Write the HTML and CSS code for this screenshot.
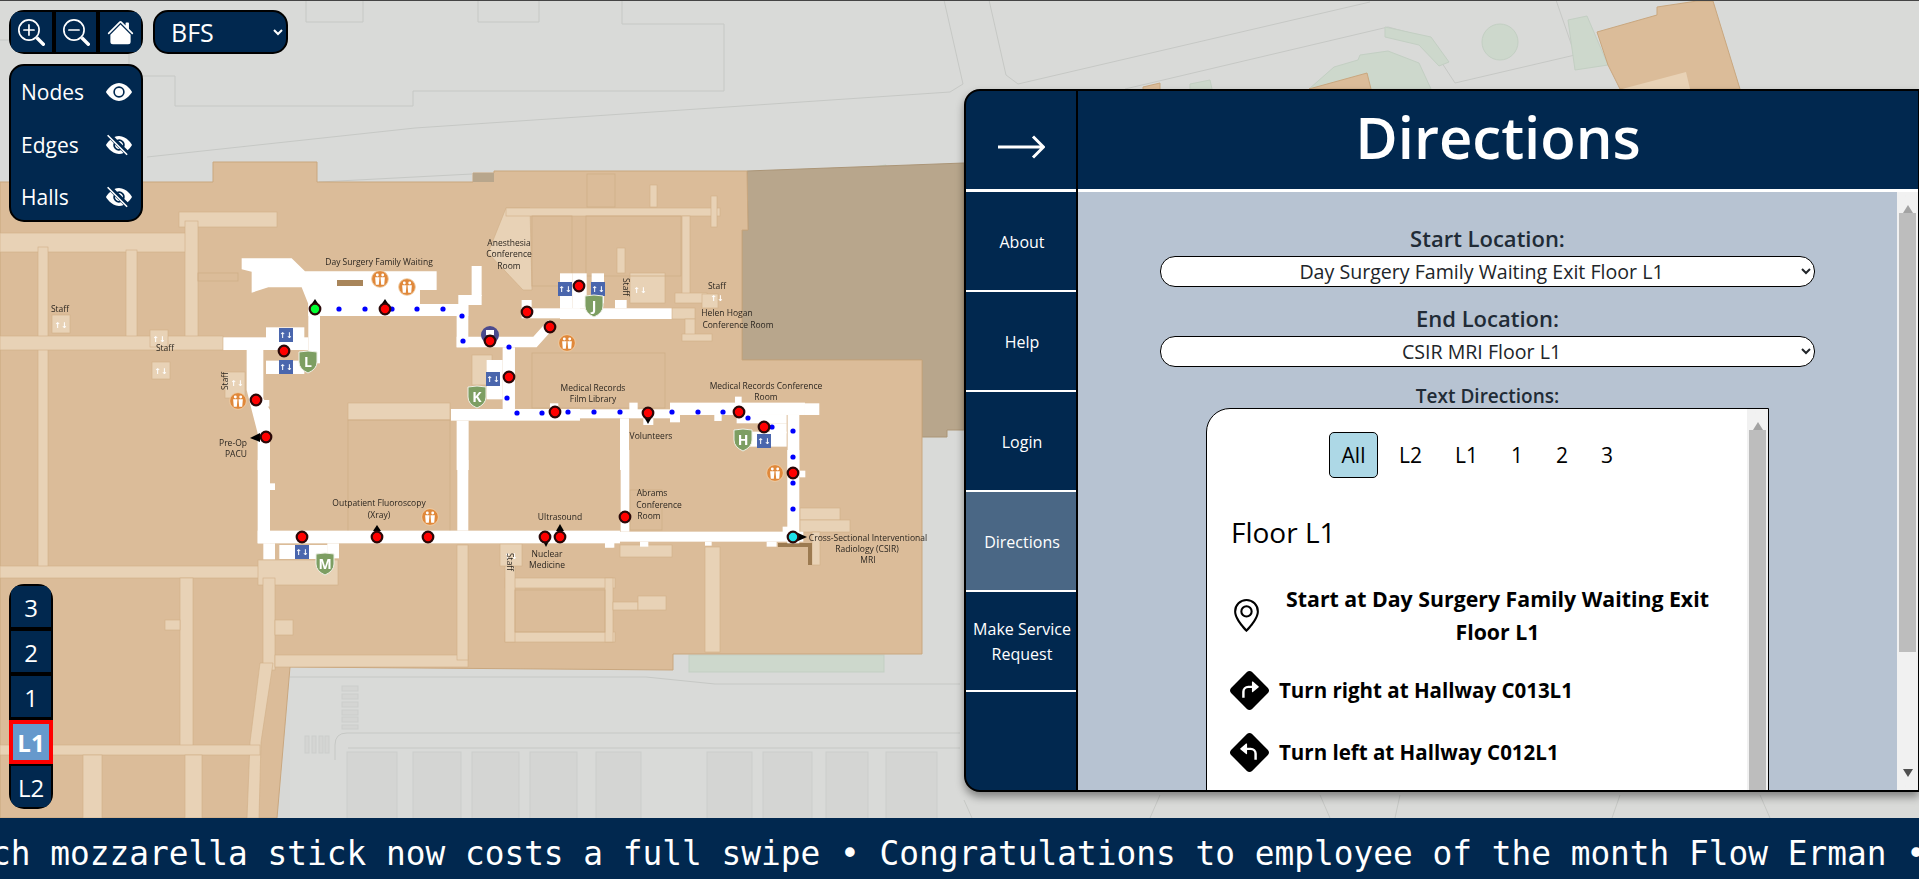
FILE: index.html
```html
<!DOCTYPE html>
<html lang="en">
<head>
    <meta charset="UTF-8">
    <meta name="viewport" content="width=device-width, initial-scale=1.0">
    <title>Directions</title>
    <link rel="stylesheet" href="styles.css">
</head>
<body>
    <main class="map-view">
        <!-- Floor map, drawn in page coordinates -->
        <svg class="map" viewBox="0 1 1919 817" aria-label="Floor map">
            <defs>
                <symbol id="wc" viewBox="0 0 20 20">
                    <circle cx="10" cy="10" r="9.3" fill="#e0883a" stroke="#efcfa8" stroke-width="1"/>
                    <circle cx="7" cy="5.6" r="1.6" fill="#fff"/>
                    <circle cx="13" cy="5.6" r="1.6" fill="#fff"/>
                    <path d="M4.6 8h4.8l-.7 8.5h-3.4zM10.6 8h4.8l-.7 8.5h-3.4z" fill="#fff"/>
                </symbol>
                <symbol id="shield" viewBox="0 0 20 24">
                    <path d="M1 2Q10 0 19 2V12Q19 19 10 23Q1 19 1 12Z" fill="#7d9e62" stroke="#eef0e6" stroke-width="1"/>
                </symbol>
            </defs>

            <!-- Ground and roads -->
            <rect width="1919" height="819" fill="#d9dad8"/>
            <rect x="0" y="700" width="290" height="120" fill="#d7d8d6"/>
            <g class="road">
                <path d="M306 0V22H363V0M478 0V22H539V0"/>
                <path d="M622 0V24H724V91H413V106H175V76H129V40H0"/>
                <path d="M147 157L415 128L950 92L963 84L944 0"/>
                <path d="M319 182L472 174"/>
                <path d="M989 0L1006 75L1018 84L1370 2"/>
                <path d="M1125 89L1388 27L1425 37L1455 83L1575 55L1556 0"/>
                <path d="M290 677H646L715 684H960"/>
                <path d="M335 760V745Q335 733 347 733H960M348 748H960"/>
                <path d="M964 800L972 818M1160 795L1150 818M1320 795L1330 818M1400 795L1395 818M1620 795L1612 818M1760 795L1770 818"/>
            </g>
            <g class="green">
                <ellipse cx="1500" cy="42" rx="18" ry="18"/>
                <polygon points="1568,20 1587,16 1608,65 1575,70"/>
                <polygon points="1385,27 1431,37 1449,62 1439,66 1419,45 1385,37"/>
                <polygon points="1334,67 1358,60 1360,55 1388,51 1419,63 1431,89 1309,89"/>
                <rect x="689" y="655" width="195" height="17"/>
                <polygon points="1190,84 1210,80 1212,89 1190,89"/>
                <polygon points="854,170 886,165 890,177 857,178"/>
            </g>
            <g class="stall">
                <rect x="347" y="752" width="50" height="70"/><rect x="413" y="752" width="48" height="70"/>
                <rect x="472" y="752" width="47" height="70"/><rect x="530" y="752" width="47" height="70"/>
                <rect x="596" y="752" width="45" height="70"/><rect x="707" y="752" width="45" height="70"/>
                <rect x="763" y="752" width="49" height="70"/><rect x="826" y="752" width="42" height="70"/>
                <rect x="886" y="752" width="51" height="70"/>
                <rect x="342" y="686" width="16" height="5"/><rect x="342" y="694" width="16" height="5"/>
                <rect x="342" y="702" width="16" height="5"/><rect x="342" y="710" width="16" height="5"/>
                <rect x="342" y="717" width="16" height="5"/><rect x="342" y="725" width="16" height="4"/>
                <rect x="305" y="736" width="4" height="17"/><rect x="312" y="736" width="4" height="17"/>
                <rect x="319" y="736" width="4" height="17"/><rect x="325" y="736" width="4" height="17"/>
            </g>

            <!-- Building -->
            <polygon class="wing" points="747,171 964,163 964,430 947,430 947,437 922,437 922,360 742,360 742,230 748,230"/>
            <polygon class="block" points="0,182 213,182 213,162 317,162 317,182 473,182 473,173 494,173 494,171 747,171 748,230 742,230 742,360 922,360 922,654 673,654 673,670 290,667 277,818 0,818"/>
            <polygon class="block" points="1597,32 1657,15 1657,7 1697,1 1713,1 1740,89 1620,89 1608,65"/>
            <polygon class="block" points="1367,73 1371,89 1309,89"/>
            <polygon class="block" points="1143,87 1160,83 1160,90 1143,90"/>
            <rect x="473" y="173" width="21" height="9" fill="#b8a68c"/>
            <polygon points="1622,89 1686,72 1690,89" fill="#e8d2b6"/>

            <!-- Service corridors -->
            <g class="hall">
                <rect x="0" y="233" width="195" height="19"/><rect x="179" y="212" width="98" height="15"/>
                <rect x="185" y="221" width="13" height="127"/><rect x="38" y="247" width="10" height="325"/>
                <rect x="126" y="250" width="11" height="98"/><rect x="0" y="336" width="223" height="14"/>
                <rect x="0" y="566" width="265" height="12"/><rect x="258" y="560" width="80" height="25"/>
                <rect x="263" y="578" width="12" height="92"/><rect x="275" y="655" width="193" height="12"/>
                <rect x="457" y="545" width="11" height="115"/>
                <polygon points="260,663 273,663 261,742 259,818 247,818 250,742"/>
                <rect x="180" y="578" width="13" height="172"/><rect x="0" y="745" width="260" height="10"/>
                <rect x="83" y="755" width="19" height="63"/><rect x="185" y="755" width="17" height="63"/>
                <rect x="165" y="620" width="15" height="10"/><rect x="275" y="620" width="18" height="15"/>
                <rect x="505" y="578" width="110" height="10"/><rect x="505" y="632" width="110" height="10"/>
                <rect x="505" y="550" width="10" height="92"/><rect x="605" y="578" width="8" height="64"/>
                <rect x="705" y="547" width="15" height="105"/><rect x="613" y="602" width="25" height="8"/>
                <rect x="638" y="596" width="28" height="14"/>
                <rect x="800" y="508" width="40" height="12"/><rect x="800" y="520" width="50" height="12"/>
                <rect x="812" y="532" width="8" height="33"/>
                <polygon points="506,208 530,208 532,290 523,290 488,253"/>
                <rect x="506" y="208" width="214" height="8"/><rect x="711" y="196" width="6" height="31"/>
                <rect x="650" y="185" width="7" height="22"/><rect x="617" y="248" width="8" height="25"/>
                <rect x="682" y="216" width="8" height="84"/><rect x="675" y="293" width="32" height="10"/>
                <rect x="672" y="308" width="23" height="11"/><rect x="685" y="319" width="10" height="21"/>
                <rect x="682" y="334" width="30" height="7"/>
                <rect x="348" y="403" width="102" height="17"/>
                <rect x="630" y="273" width="35" height="30"/><rect x="472" y="355" width="20" height="30"/>
                <rect x="620" y="545" width="52" height="12"/>
                <rect x="52" y="315" width="18" height="18"/><rect x="150" y="330" width="18" height="17"/>
                <rect x="152" y="362" width="18" height="17"/><rect x="225" y="372" width="20" height="26"/>
                <rect x="500" y="544" width="22" height="22"/><rect x="702" y="294" width="16" height="14"/>
            </g>
            <g class="room-line">
                <rect x="587" y="174" width="28" height="33"/><rect x="348" y="420" width="102" height="115"/>
                <rect x="532" y="353" width="133" height="55"/><rect x="630" y="490" width="32" height="40"/>
                <rect x="515" y="590" width="90" height="42"/><rect x="532" y="216" width="40" height="70"/>
                <rect x="586" y="216" width="95" height="60"/><rect x="198" y="273" width="40" height="8"/>
            </g>
            <rect x="778" y="543" width="34" height="4" fill="#9c7a50"/><rect x="808" y="543" width="4" height="22" fill="#9c7a50"/>

            <!-- Walkable halls on this route, west and north wings -->
            <g class="open" transform="translate(220 230) scale(.3333)">
                <polygon points="65,85 215,85 255,124 650,124 650,180 600,180 600,222 265,222 245,172 145,172 95,188 95,125 65,118"/>
                <rect x="265" y="222" width="480" height="36"/><rect x="265" y="222" width="35" height="178"/>
                <rect x="710" y="222" width="35" height="130"/><rect x="755" y="108" width="30" height="90"/>
                <rect x="715" y="195" width="70" height="30"/>
                <polygon points="710,320 940,320 985,270 1010,285 950,352 710,352"/>
                <rect x="905" y="235" width="175" height="30"/><rect x="905" y="210" width="30" height="30"/>
                <rect x="848" y="352" width="37" height="190"/><rect x="800" y="390" width="48" height="118"/>
                <rect x="693" y="537" width="387" height="35"/><rect x="990" y="520" width="25" height="20"/>
                <rect x="710" y="572" width="36" height="148"/>
                <rect x="10" y="322" width="255" height="38"/><rect x="138" y="292" width="115" height="45"/>
                <rect x="138" y="392" width="115" height="40"/>
                <polygon points="80,360 130,360 130,505 150,540 150,720 113,720 113,610 95,540 80,480"/>
                <rect x="130" y="510" width="18" height="20"/>
            </g>
            <rect x="337" y="280" width="26" height="6" fill="#a8855a"/>
            <!-- East wing -->
            <g class="open" transform="translate(560 230) scale(.3333)">
                <rect x="0" y="235" width="335" height="32"/><rect x="38" y="130" width="42" height="105"/>
                <rect x="95" y="130" width="37" height="90"/><rect x="0" y="130" width="38" height="105"/>
                <rect x="165" y="210" width="35" height="25"/>
                <rect x="0" y="538" width="330" height="27"/><rect x="330" y="518" width="405" height="37"/>
                <rect x="330" y="555" width="30" height="22"/><rect x="735" y="520" width="43" height="35"/>
                <rect x="683" y="555" width="35" height="165"/><rect x="208" y="518" width="25" height="22"/>
                <rect x="250" y="565" width="30" height="20"/><rect x="525" y="500" width="20" height="20"/>
                <rect x="463" y="555" width="22" height="18"/><rect x="180" y="565" width="27" height="155"/>
                <rect x="530" y="555" width="150" height="25"/><rect x="565" y="605" width="115" height="45"/>
                <rect x="630" y="580" width="50" height="30"/>
            </g>
            <!-- South corridor -->
            <g class="open" transform="translate(220 460) scale(.3333)">
                <rect x="113" y="0" width="37" height="250"/><rect x="150" y="70" width="15" height="20"/>
                <rect x="113" y="212" width="1087" height="38"/><rect x="712" y="0" width="33" height="212"/>
                <rect x="130" y="250" width="35" height="48"/><rect x="178" y="255" width="145" height="42"/>
                <rect x="322" y="250" width="35" height="45"/><rect x="1155" y="250" width="25" height="12"/>
            </g>
            <g class="open" transform="translate(600 450) scale(.3333)">
                <rect x="62" y="0" width="26" height="245"/><rect x="0" y="245" width="610" height="30"/>
                <rect x="562" y="0" width="36" height="280"/><rect x="598" y="62" width="18" height="20"/>
                <rect x="15" y="275" width="28" height="18"/><rect x="120" y="275" width="25" height="15"/>
                <rect x="315" y="275" width="20" height="12"/><rect x="500" y="275" width="30" height="15"/>
                <rect x="548" y="230" width="20" height="20"/>
            </g>

            <!-- Lifts, restrooms and stairs -->
            <g class="lift">
                <rect x="279" y="328" width="14" height="14"/><rect x="279" y="360" width="14" height="14"/>
                <rect x="558" y="282" width="14" height="14"/><rect x="591" y="282" width="14" height="14"/>
                <rect x="486" y="372" width="14" height="14"/><rect x="757" y="434" width="14" height="14"/>
                <rect x="295" y="545" width="14" height="14"/>
            </g>
            <text class="arrows" x="286" y="338">↑↓</text><text class="arrows" x="286" y="370">↑↓</text>
            <text class="arrows" x="565" y="292">↑↓</text><text class="arrows" x="598" y="292">↑↓</text>
            <text class="arrows" x="493" y="382">↑↓</text><text class="arrows" x="764" y="444">↑↓</text>
            <text class="arrows" x="302" y="555">↑↓</text>
            <text class="arrows" x="61" y="328">↑↓</text><text class="arrows" x="159" y="342">↑↓</text>
            <text class="arrows" x="161" y="374">↑↓</text><text class="arrows" x="237" y="386">↑↓</text>
            <text class="arrows" x="640" y="293">↑↓</text><text class="arrows" x="717" y="301">↑↓</text>
            <text class="arrows" x="511" y="559">↑↓</text>
            <use href="#wc" x="371" y="270" width="18" height="18"/><use href="#wc" x="398" y="278" width="18" height="18"/>
            <use href="#wc" x="229" y="392" width="18" height="18"/><use href="#wc" x="558" y="334" width="18" height="18"/>
            <use href="#wc" x="421" y="508" width="18" height="18"/><use href="#wc" x="766" y="464" width="18" height="18"/>
            <circle cx="490" cy="335" r="9" fill="#4b4a8e"/>
            <rect x="486" y="330" width="8" height="5" fill="#fff"/>
            <use href="#shield" x="298" y="350" width="20" height="24"/><text class="shield-letter" x="308" y="367">L</text>
            <use href="#shield" x="467" y="385" width="20" height="24"/><text class="shield-letter" x="477" y="402">K</text>
            <use href="#shield" x="584" y="294" width="20" height="24"/><text class="shield-letter" x="594" y="311">J</text>
            <use href="#shield" x="733" y="428" width="20" height="24"/><text class="shield-letter" x="743" y="445">H</text>
            <use href="#shield" x="315" y="552" width="20" height="24"/><text class="shield-letter" x="325" y="569">M</text>

            <!-- Room names -->
            <g class="label">
                <text x="379" y="265">Day Surgery Family Waiting</text>
                <text x="509" y="246">Anesthesia</text><text x="509" y="257">Conference</text><text x="509" y="269">Room</text>
                <text x="60" y="312">Staff</text><text x="165" y="351">Staff</text><text x="717" y="289">Staff</text>
                <text x="233" y="446">Pre-Op</text><text x="236" y="457">PACU</text>
                <text x="727" y="316">Helen Hogan</text><text x="738" y="328">Conference Room</text>
                <text x="593" y="391">Medical Records</text><text x="593" y="402">Film Library</text>
                <text x="766" y="389">Medical Records Conference</text><text x="766" y="400">Room</text>
                <text x="651" y="439">Volunteers</text>
                <text x="379" y="506">Outpatient Fluoroscopy</text><text x="379" y="518">(Xray)</text>
                <text x="560" y="520">Ultrasound</text><text x="547" y="557">Nuclear</text><text x="547" y="568">Medicine</text>
                <text x="652" y="496">Abrams</text><text x="659" y="508">Conference</text><text x="649" y="519">Room</text>
                <text x="868" y="541">Cross-Sectional Interventional</text><text x="867" y="552">Radiology (CSIR)</text><text x="868" y="563">MRI</text>
                <text x="0" y="3" transform="translate(225 381) rotate(-90)">Staff</text>
                <text x="0" y="3" transform="translate(626 287) rotate(90)">Staff</text>
                <text x="0" y="3" transform="translate(510 562) rotate(90)">Staff</text>
            </g>

            <!-- Route -->
            <g class="pins">
                <polygon points="311,305 315,299 319,305"/><polygon points="381,305 385,299 389,305"/>
                <polygon points="260,433 250,438 260,442"/><polygon points="644,417 648,424 652,417"/>
                <polygon points="373,531 377,525 381,531"/><polygon points="556,531 560,524 564,531"/>
                <polygon points="543,541 546,547 549,541"/><polygon points="798,533 807,537 798,541"/>
            </g>
            <g class="dot">
                <circle cx="339" cy="309" r="2.6"/><circle cx="365" cy="309" r="2.6"/><circle cx="392" cy="309" r="2.6"/>
                <circle cx="417" cy="309" r="2.6"/><circle cx="443" cy="309" r="2.6"/><circle cx="462" cy="316" r="2.6"/>
                <circle cx="463" cy="341" r="2.6"/><circle cx="509" cy="347" r="2.6"/><circle cx="507" cy="398" r="2.6"/>
                <circle cx="517" cy="413" r="2.6"/><circle cx="542" cy="413" r="2.6"/><circle cx="568" cy="412" r="2.6"/>
                <circle cx="594" cy="412" r="2.6"/><circle cx="620" cy="412" r="2.6"/><circle cx="672" cy="412" r="2.6"/>
                <circle cx="698" cy="412" r="2.6"/><circle cx="723" cy="412" r="2.6"/><circle cx="748" cy="418" r="2.6"/>
                <circle cx="772" cy="427" r="2.6"/><circle cx="793" cy="431" r="2.6"/><circle cx="793" cy="457" r="2.6"/>
                <circle cx="793" cy="483" r="2.6"/><circle cx="793" cy="509" r="2.6"/>
            </g>
            <g class="node">
                <circle cx="385" cy="309" r="5.3"/><circle cx="284" cy="351" r="5.3"/><circle cx="256" cy="400" r="5.3"/>
                <circle cx="266" cy="437" r="5.3"/><circle cx="490" cy="341" r="5.3"/><circle cx="527" cy="312" r="5.3"/>
                <circle cx="550" cy="327" r="5.3"/><circle cx="509" cy="377" r="5.3"/><circle cx="555" cy="412" r="5.3"/>
                <circle cx="579" cy="286" r="5.3"/><circle cx="648" cy="413" r="5.3"/><circle cx="739" cy="412" r="5.3"/>
                <circle cx="764" cy="427" r="5.3"/><circle cx="793" cy="473" r="5.3"/><circle cx="625" cy="517" r="5.3"/>
                <circle cx="302" cy="537" r="5.3"/><circle cx="377" cy="537" r="5.3"/><circle cx="428" cy="537" r="5.3"/>
                <circle cx="545" cy="537" r="5.3"/><circle cx="560" cy="537" r="5.3"/>
                <circle class="start" cx="315" cy="309" r="5.3"/><circle class="end" cx="793" cy="537" r="5.3"/>
            </g>
        </svg>

        <!-- Map controls -->
        <div class="map-controls">
            <div class="tool-row">
                <div class="zoom-group">
                    <button class="icon-btn" type="button" aria-label="Zoom in">
                        <svg viewBox="0 0 16 16"><path fill-rule="evenodd" d="M6.5 12a5.5 5.5 0 1 0 0-11 5.5 5.5 0 0 0 0 11M13 6.5a6.5 6.5 0 1 1-13 0 6.5 6.5 0 0 1 13 0"/><path d="M10.344 11.742q.044.06.098.115l3.85 3.85a1 1 0 0 0 1.415-1.414l-3.85-3.85a1 1 0 0 0-.115-.1 6.5 6.5 0 0 1-1.398 1.4z"/><path fill-rule="evenodd" d="M6.5 3a.5.5 0 0 1 .5.5V6h2.5a.5.5 0 0 1 0 1H7v2.5a.5.5 0 0 1-1 0V7H3.5a.5.5 0 0 1 0-1H6V3.5a.5.5 0 0 1 .5-.5"/></svg>
                    </button>
                    <button class="icon-btn" type="button" aria-label="Zoom out">
                        <svg viewBox="0 0 16 16"><path fill-rule="evenodd" d="M6.5 12a5.5 5.5 0 1 0 0-11 5.5 5.5 0 0 0 0 11M13 6.5a6.5 6.5 0 1 1-13 0 6.5 6.5 0 0 1 13 0"/><path d="M10.344 11.742q.044.06.098.115l3.85 3.85a1 1 0 0 0 1.415-1.414l-3.85-3.85a1 1 0 0 0-.115-.1 6.5 6.5 0 0 1-1.398 1.4z"/><path fill-rule="evenodd" d="M3 6.5a.5.5 0 0 1 .5-.5h6a.5.5 0 0 1 0 1h-6a.5.5 0 0 1-.5-.5"/></svg>
                    </button>
                    <button class="icon-btn" type="button" aria-label="Home">
                        <svg viewBox="0 0 16 16"><path d="M8.707 1.5a1 1 0 0 0-1.414 0L.646 8.146a.5.5 0 0 0 .708.708L8 2.207l6.646 6.647a.5.5 0 0 0 .708-.708L13 5.793V2.5a.5.5 0 0 0-.5-.5h-1a.5.5 0 0 0-.5.5v1.293z"/><path d="m8 3.293 6 6V13.5a1.5 1.5 0 0 1-1.5 1.5h-9A1.5 1.5 0 0 1 2 13.5V9.293z"/></svg>
                    </button>
                </div>
                <select class="building-select"><option>BFS</option></select>
            </div>
            <div class="layer-box">
                <div class="layer-row"><span>Nodes</span>
                    <svg viewBox="0 0 16 16"><path d="M10.5 8a2.5 2.5 0 1 1-5 0 2.5 2.5 0 0 1 5 0"/><path d="M0 8s3-5.5 8-5.5S16 8 16 8s-3 5.5-8 5.5S0 8 0 8m8 3.5a3.5 3.5 0 1 0 0-7 3.5 3.5 0 0 0 0 7"/></svg>
                </div>
                <div class="layer-row"><span>Edges</span>
                    <svg viewBox="0 0 16 16"><path d="m10.79 12.912-1.614-1.615a3.5 3.5 0 0 1-4.474-4.474l-2.06-2.06C.938 6.278 0 8 0 8s3 5.5 8 5.5a7 7 0 0 0 2.79-.588M5.21 3.088A7 7 0 0 1 8 2.5c5 0 8 5.5 8 5.5s-.939 1.721-2.641 3.238l-2.062-2.062a3.5 3.5 0 0 0-4.474-4.474z"/><path d="M5.525 7.646a2.5 2.5 0 0 0 2.829 2.829zm4.95.708-2.829-2.83a2.5 2.5 0 0 1 2.829 2.829zm2.171 6-12-12 .708-.708 12 12z"/></svg>
                </div>
                <div class="layer-row"><span>Halls</span>
                    <svg viewBox="0 0 16 16"><path d="m10.79 12.912-1.614-1.615a3.5 3.5 0 0 1-4.474-4.474l-2.06-2.06C.938 6.278 0 8 0 8s3 5.5 8 5.5a7 7 0 0 0 2.79-.588M5.21 3.088A7 7 0 0 1 8 2.5c5 0 8 5.5 8 5.5s-.939 1.721-2.641 3.238l-2.062-2.062a3.5 3.5 0 0 0-4.474-4.474z"/><path d="M5.525 7.646a2.5 2.5 0 0 0 2.829 2.829zm4.95.708-2.829-2.83a2.5 2.5 0 0 1 2.829 2.829zm2.171 6-12-12 .708-.708 12 12z"/></svg>
                </div>
            </div>
        </div>

        <div class="floor-picker">
            <button class="floor-btn" type="button">3</button>
            <button class="floor-btn" type="button">2</button>
            <button class="floor-btn" type="button">1</button>
            <button class="floor-btn active" type="button">L1</button>
            <button class="floor-btn" type="button">L2</button>
        </div>

        <!-- Directions panel -->
        <section class="panel">
            <nav class="side-nav">
                <button class="collapse-btn" type="button" aria-label="Collapse">
                    <svg viewBox="0 0 47 24"><path d="M0 12H45M35 1.5L45.5 12L35 22.5" fill="none" stroke="#fff" stroke-width="3"/></svg>
                </button>
                <a class="nav-item">About</a>
                <a class="nav-item">Help</a>
                <a class="nav-item">Login</a>
                <a class="nav-item active">Directions</a>
                <a class="nav-item">Make Service Request</a>
            </nav>
            <div class="panel-main">
                <header class="panel-header"><h1>Directions</h1></header>
                <div class="panel-body">
                    <div class="panel-scroll">
                        <label class="field-label">Start Location:</label>
                        <select class="location-select"><option>Day Surgery Family Waiting Exit Floor L1</option></select>
                        <label class="field-label">End Location:</label>
                        <select class="location-select"><option>CSIR MRI Floor L1</option></select>
                        <h2 class="text-label">Text Directions:</h2>
                        <div class="directions-box">
                            <div class="directions-scroll">
                                <div class="floor-tabs">
                                    <button class="tab active" type="button">All</button>
                                    <button class="tab" type="button">L2</button>
                                    <button class="tab" type="button">L1</button>
                                    <button class="tab" type="button">1</button>
                                    <button class="tab" type="button">2</button>
                                    <button class="tab" type="button">3</button>
                                </div>
                                <h3 class="floor-title">Floor L1</h3>
                                <div class="step start-step">
                                    <svg viewBox="0 0 16 16"><path d="M12.166 8.94c-.524 1.062-1.234 2.12-1.96 3.07A32 32 0 0 1 8 14.58a32 32 0 0 1-2.206-2.57c-.726-.95-1.436-2.008-1.96-3.07C3.304 7.867 3 6.862 3 6a5 5 0 0 1 10 0c0 .862-.305 1.867-.834 2.94M8 16s6-5.686 6-10A6 6 0 0 0 2 6c0 4.314 6 10 6 10"/><path d="M8 8a2 2 0 1 1 0-4 2 2 0 0 1 0 4m0 1a3 3 0 1 0 0-6 3 3 0 0 0 0 6"/></svg>
                                    <p>Start at Day Surgery Family Waiting Exit Floor L1</p>
                                </div>
                                <div class="step">
                                    <svg viewBox="0 0 16 16"><path d="M9.05.435c-.58-.58-1.52-.58-2.1 0L.436 6.95c-.58.58-.58 1.519 0 2.098l6.516 6.516c.58.58 1.519.58 2.098 0l6.516-6.516c.58-.58.58-1.519 0-2.098zM9 8.466V7H7.5A1.5 1.5 0 0 0 6 8.5V11H5V8.5A2.5 2.5 0 0 1 7.5 6H9V4.534a.25.25 0 0 1 .41-.192l2.36 1.966c.1.083.1.237 0 .32L9.41 8.658A.25.25 0 0 1 9 8.466"/></svg>
                                    <p>Turn right at Hallway C013L1</p>
                                </div>
                                <div class="step">
                                    <svg class="flip" viewBox="0 0 16 16"><path d="M9.05.435c-.58-.58-1.52-.58-2.1 0L.436 6.95c-.58.58-.58 1.519 0 2.098l6.516 6.516c.58.58 1.519.58 2.098 0l6.516-6.516c.58-.58.58-1.519 0-2.098zM9 8.466V7H7.5A1.5 1.5 0 0 0 6 8.5V11H5V8.5A2.5 2.5 0 0 1 7.5 6H9V4.534a.25.25 0 0 1 .41-.192l2.36 1.966c.1.083.1.237 0 .32L9.41 8.658A.25.25 0 0 1 9 8.466"/></svg>
                                    <p>Turn left at Hallway C012L1</p>
                                </div>
                            </div>
                            <div class="scrollbar">
                                <span class="scroll-up"></span>
                                <span class="scroll-thumb fill"></span>
                            </div>
                        </div>
                    </div>
                    <div class="scrollbar">
                        <span class="scroll-up"></span>
                        <span class="scroll-thumb outer"></span>
                        <span class="scroll-down"></span>
                    </div>
                </div>
            </div>
        </section>
    </main>

    <footer class="ticker">
        <p>ch mozzarella stick now costs a full swipe • Congratulations to employee of the month Flow Erman •</p>
    </footer>
</body>
</html>
```

FILE: styles.css
```css
/* Apply basic reset */
* {
    margin: 0;
    padding: 0;
    box-sizing: border-box;
}

body {
    font-family: "Open Sans", "Noto Sans", sans-serif;
    height: 100vh;
    display: flex;
    flex-direction: column;
    overflow: hidden;
    border-top: 1px solid #444;
    background: #d9dad8;
}

button, select {
    font-family: inherit;
}

/* Map area */
.map-view {
    position: relative;
    flex: 1;
    overflow: hidden;
}

.map {
    position: absolute;
    inset: 0;
    width: 100%;
    height: 100%;
    filter: blur(0.4px);
}

.road path {
    fill: none;
    stroke: #c6c8c5;
    stroke-width: 1;
}

.green * {
    fill: #cdd8cc;
    stroke: #c3cfc3;
    stroke-width: 1;
}

.stall rect {
    fill: #d4d5d3;
    stroke: #cccdcb;
    stroke-width: 1;
}

.block {
    fill: #dbbc99;
    stroke: #c9a77f;
    stroke-width: 1;
}

.wing {
    fill: #b8a68c;
    stroke: #ab9577;
    stroke-width: 1;
}

.hall {
    fill: #e8d2b6;
    stroke: #d0ae87;
    stroke-width: 0.6;
}

.room-line rect {
    fill: none;
    stroke: #cfae87;
    stroke-width: 0.8;
}

.open {
    fill: #fff;
}

.lift rect {
    fill: #4a66ad;
}

.arrows {
    fill: #fff;
    font-family: "DejaVu Sans", sans-serif;
    font-size: 8px;
    font-weight: bold;
    text-anchor: middle;
}

.shield-letter {
    fill: #fff;
    font-size: 14px;
    font-weight: bold;
    text-anchor: middle;
}

.label text {
    fill: #2b2620;
    font-size: 8.5px;
    text-anchor: middle;
}

.pins {
    fill: #000;
}

.dot {
    fill: #0000ff;
}

.node circle {
    fill: #f00;
    stroke: #2a0808;
    stroke-width: 2.2;
}

.node .start {
    fill: #0f3;
}

.node .end {
    fill: #1fe0e8;
}

/* Controls over the map */
.map-controls {
    position: absolute;
    top: 9px;
    left: 9px;
    display: flex;
    flex-direction: column;
    gap: 10px;
}

.tool-row {
    display: flex;
    gap: 10px;
}

.zoom-group {
    display: flex;
    gap: 4px;
    width: 134px;
    height: 44px;
    padding: 2px;
    background: #000;
    border-radius: 15px;
    overflow: hidden;
}

.icon-btn {
    flex: 1;
    display: flex;
    align-items: center;
    justify-content: center;
    background: #01284f;
    border: none;
}

.icon-btn svg {
    width: 27px;
    height: 27px;
    fill: #fff;
}

.building-select {
    width: 135px;
    height: 44px;
    padding-left: 12px;
    background: #01284f;
    color: #fff;
    border: 2px solid #000;
    border-radius: 15px;
    font-size: 25px;
}

.layer-box {
    width: 134px;
    height: 158px;
    background: #01284f;
    border: 2px solid #000;
    border-radius: 15px;
}

.layer-row {
    display: flex;
    align-items: center;
    justify-content: space-between;
    height: 52.5px;
    padding: 0 9px 0 10px;
    color: #fff;
    font-size: 21px;
}

.layer-row svg {
    width: 26px;
    height: 26px;
    fill: #fff;
}

/* Floor picker */
.floor-picker {
    position: absolute;
    left: 9px;
    bottom: 9px;
    display: flex;
    flex-direction: column;
    gap: 4px;
    width: 44px;
    padding: 2px;
    background: #000;
    border-radius: 15px;
    overflow: hidden;
}

.floor-btn {
    height: 41px;
    padding-top: 2px;
    background: #01284f;
    color: #fff;
    border: none;
    font-size: 24px;
}

.floor-btn.active {
    height: 44px;
    padding-top: 0;
    margin: -1px -2px -2px;
    background: #6699cc;
    border: 4px solid #f00;
    font-weight: bold;
}

/* Directions panel */
.panel {
    position: absolute;
    top: 88px;
    right: 0;
    display: flex;
    width: 955px;
    height: 703px;
    background: #01284f;
    border: 2px solid #000;
    border-right-width: 1px;
    border-radius: 16px 0 0 16px;
    box-shadow: 0 5px 8px rgba(0, 0, 0, 0.4);
    overflow: hidden;
}

.side-nav {
    display: flex;
    flex-direction: column;
    flex: none;
    width: 112px;
    border-right: 2px solid #000;
}

.collapse-btn {
    flex: none;
    height: 101px;
    padding-top: 14px;
    display: flex;
    align-items: center;
    justify-content: center;
    background: none;
    border: none;
    border-bottom: 3px solid #fff;
}

.collapse-btn svg {
    width: 47px;
    height: 24px;
}

.nav-item {
    flex: none;
    display: flex;
    align-items: center;
    justify-content: center;
    height: 100px;
    padding: 2px 5px 0 7px;
    color: #fff;
    font-size: 16px;
    line-height: 25px;
    text-align: center;
    border-bottom: 2px solid #fff;
}

.nav-item.active {
    background: #4a6785;
}

.panel-main {
    flex: 1;
    min-width: 0;
    display: flex;
    flex-direction: column;
}

.panel-header {
    flex: none;
    height: 101px;
    border-bottom: 3px solid #fff;
    text-align: center;
    color: #fff;
}

.panel-header h1 {
    font-size: 58px;
    font-weight: 600;
    line-height: 92px;
}

.panel-body {
    flex: 1;
    min-height: 0;
    display: flex;
    background: #b7c3d2;
    overflow: hidden;
}

.panel-scroll {
    flex: 1;
    min-width: 0;
    display: flex;
    flex-direction: column;
    align-items: center;
}

.field-label {
    flex: none;
    height: 30px;
    font-size: 22px;
    font-weight: 600;
    line-height: 30px;
    color: #212b36;
}

.panel-scroll .field-label:first-child {
    margin-top: 31px;
}

.location-select {
    flex: none;
    width: 655px;
    height: 31px;
    margin: 3px 0 16px;
    background: #fff;
    color: #212529;
    border: 1.5px solid #000;
    border-radius: 15px;
    font-size: 19.6px;
    text-align: center;
}

.text-label {
    flex: none;
    height: 27px;
    margin-top: -2px;
    font-size: 19px;
    font-weight: 600;
    line-height: 30px;
    color: #212b36;
}

/* Text directions */
.directions-box {
    flex: none;
    display: flex;
    width: 563px;
    height: 387px;
    background: #fff;
    border: 1.5px solid #000;
    border-radius: 24px 0 0 0;
    overflow: hidden;
    color: #000;
}

.directions-scroll {
    flex: 1;
    min-width: 0;
}

.floor-tabs {
    display: flex;
    justify-content: center;
    gap: 9px;
    margin-top: 23px;
}

.tab {
    height: 46px;
    padding: 0 11px;
    background: none;
    border: 1px solid transparent;
    border-radius: 5px;
    font-size: 21px;
}

.tab.active {
    min-width: 49px;
    background: #add8e6;
    border-color: #000;
}

.floor-title {
    margin: 36px 0 32px 24px;
    font-size: 28px;
    font-weight: 500;
    line-height: 36px;
}

.step {
    display: flex;
    align-items: center;
    min-height: 39px;
    margin: 0 25px 23px 23px;
    font-size: 20.5px;
    font-weight: 700;
    line-height: 33px;
}

.step svg {
    flex: none;
    width: 39px;
    height: 39px;
    margin-right: 10px;
}

.step .flip {
    transform: scaleX(-1);
}

.start-step {
    font-size: 21.3px;
}

.start-step svg {
    width: 33px;
    height: 33px;
    margin-right: 10px;
}

.start-step p {
    flex: 1;
    text-align: center;
}

/* Drawn scrollbars */
.scrollbar {
    flex: none;
    display: flex;
    flex-direction: column;
    align-items: center;
    width: 21px;
    background: #f1f1f1;
}

.scroll-up,
.scroll-down {
    flex: none;
    width: 0;
    height: 21px;
    border-left: 5px solid transparent;
    border-right: 5px solid transparent;
}

.scroll-up {
    border-top: 8px solid #f1f1f1;
    border-bottom: 8px solid #a3a3a3;
}

.scroll-down {
    border-top: 8px solid #505050;
    border-bottom: 8px solid #f1f1f1;
}

.scroll-thumb {
    width: 17px;
    background: #bdbdbd;
}

.scroll-thumb.fill {
    flex: 1;
}

.scroll-thumb.outer {
    height: 439px;
    margin-bottom: auto;
}

/* News ticker */
.ticker {
    flex: none;
    height: 61px;
    padding-top: 6px;
    background: #01284f;
    color: #fff;
    overflow: hidden;
}

.ticker p {
    margin-left: -9px;
    font-family: "DejaVu Sans Mono", monospace;
    font-size: 32.8px;
    line-height: 60px;
    white-space: nowrap;
}
```
